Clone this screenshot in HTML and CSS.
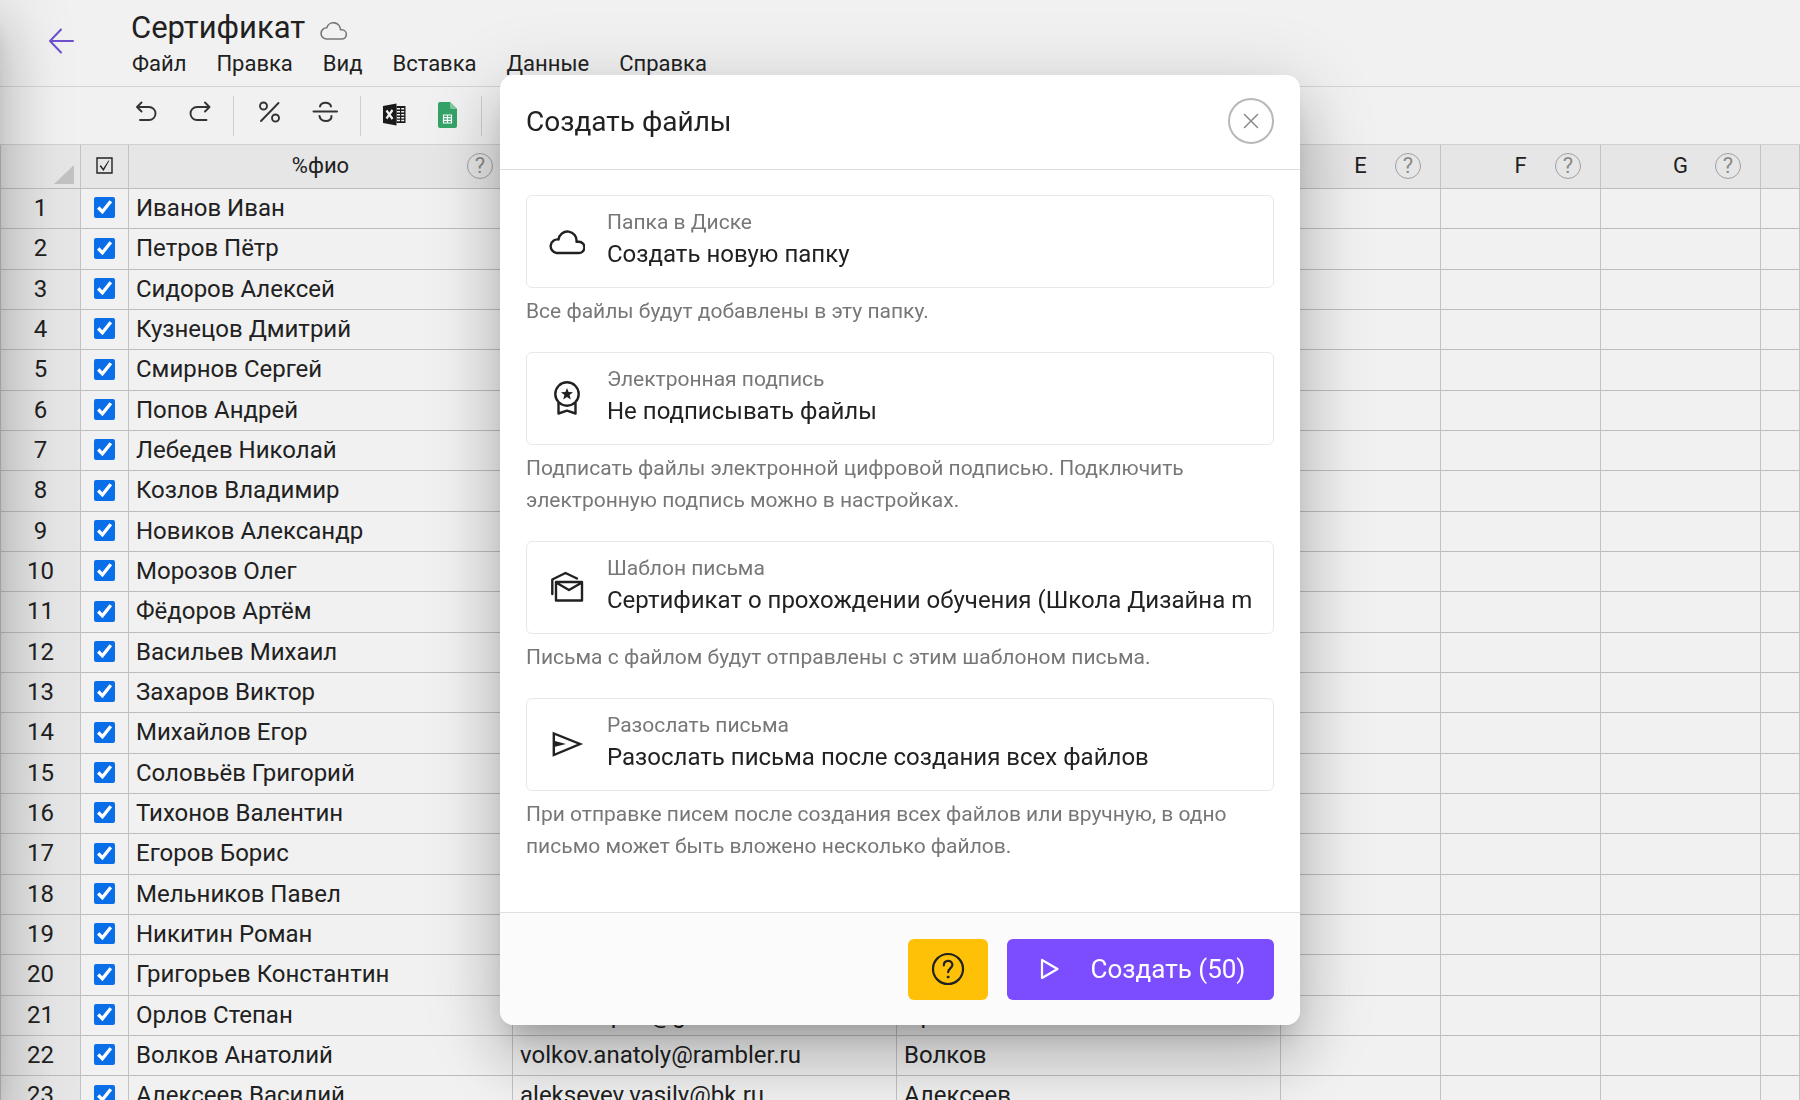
FILE: index.html
```html
<!DOCTYPE html>
<html lang="ru">
<head>
<meta charset="utf-8">
<title>Сертификат</title>
<meta name="viewport" content="width=device-width, initial-scale=1">
<link rel="stylesheet" href="styles.css">
</head>
<body>
<div class="app">
  <header class="topbar">
    <a class="back" href="#" aria-label="Назад">
      <svg width="26" height="26" viewBox="0 0 26 26" fill="none" stroke="currentColor" stroke-width="2" stroke-linecap="round" stroke-linejoin="round"><path d="M25 13H2M13 1.500L2 13l11 11.500"/></svg>
    </a>
    <div class="heading">
      <div class="title-row">
        <h1 class="title">Сертификат</h1>
        <svg class="saved" width="27" height="20" viewBox="0 0 27 20" fill="none" stroke="currentColor" stroke-width="1.600" stroke-linejoin="round"><path d="M6.500 19h15a4.600 4.600 0 0 0 0.400-9.200h-1.400A7 7 0 0 0 6.800 7.800a5.600 5.600 0 0 0-.3 11.200z"/></svg>
      </div>
      <nav class="menu">
        <button type="button">Файл</button>
        <button type="button">Правка</button>
        <button type="button">Вид</button>
        <button type="button">Вставка</button>
        <button type="button">Данные</button>
        <button type="button">Справка</button>
      </nav>
    </div>
  </header>

  <div class="toolbar">
    <button class="tool" type="button" aria-label="Отменить">
      <svg width="22" height="22" viewBox="0 0 22 22" fill="none" stroke="currentColor" stroke-width="1.900" stroke-linecap="round" stroke-linejoin="round"><path d="M5.500 1.500L1 6l4.500 4.500M1 6H13a6.500 6.500 0 0 1 0 13H4"/></svg>
    </button>
    <button class="tool" type="button" aria-label="Повторить">
      <svg width="22" height="22" viewBox="0 0 22 22" fill="none" stroke="currentColor" stroke-width="1.900" stroke-linecap="round" stroke-linejoin="round"><path d="M16 1.500l4.500 4.500-4.500 4.500M20.500 6H8a6.500 6.500 0 0 0 0 13h9.500"/></svg>
    </button>
    <span class="divider"></span>
    <button class="tool tool-wide" type="button" aria-label="Проценты">
      <svg width="22" height="22" viewBox="0 0 22 22" fill="none" stroke="currentColor" stroke-width="1.900" stroke-linecap="round"><path d="M20.500 2L3 20"/><circle cx="5.500" cy="5" r="3.500"/><circle cx="17.500" cy="17" r="3.500"/></svg>
    </button>
    <button class="tool tool-wide" type="button" aria-label="Зачёркнутый">
      <svg width="26" height="22" viewBox="0 0 26 22" fill="none" stroke="currentColor" stroke-width="2" stroke-linecap="round"><path d="M1.500 10.500h23.500M8 5.500C9 0.500 18 0.500 19 5.500M7.500 15c1 7 12.500 6.500 12 0"/></svg>
    </button>
    <span class="divider"></span>
    <button class="tool" type="button" aria-label="Excel">
      <svg class="excel" width="23" height="23" viewBox="0 0 23 23"><path fill="#1a1a1a" d="M0 3L13.500 0.500v22L0 20z"/><path fill="#1a1a1a" d="M13.500 3H22.500v17h-9z"/><path stroke="#f1f1f1" stroke-width="1.500" d="M14 5.700h3m1.200 0h3M14 8.700h3m1.200 0h3M14 11.700h3m1.200 0h3M14 14.700h3m1.200 0h3M14 17.600h3m1.200 0h3"/><path stroke="#f1f1f1" stroke-width="2.200" d="M3.500 7.500l6 8.500M9.500 7l-6 8.500"/></svg>
    </button>
    <button class="tool" type="button" aria-label="Google Таблицы">
      <svg class="sheets" width="19" height="26" viewBox="0 0 19 26"><path fill="#35a368" d="M2 0h10l7 7v17a2 2 0 0 1-2 2H2a2 2 0 0 1-2-2V2a2 2 0 0 1 2-2z"/><path fill="#82c8a3" d="M12 0l7 7h-5.500A1.500 1.500 0 0 1 12 5.500z"/><path fill="none" stroke="#fff" stroke-width="1.200" d="M5.500 13h8v8h-8zM5.500 15.700h8M5.500 18.300h8M9.500 13v8"/></svg>
    </button>
    <span class="divider"></span>
  </div>

  <main class="sheet">
    <table class="grid">
      <colgroup><col class="c-num"><col class="c-check"><col class="c-data"><col class="c-data"><col class="c-data"><col class="c-free"><col class="c-free"><col class="c-free"><col></colgroup>
      <thead>
        <tr>
          <th class="num corner"><svg width="20" height="19" viewBox="0 0 20 19"><path fill="#c2c2c2" d="M20 0v19H0z"/></svg></th>
          <th><svg class="tick" width="17" height="17" viewBox="0 0 17 17"><path fill="none" stroke="#222" stroke-width="1.400" d="M1 1h15v15H1z"/><path fill="#222" d="M3.500 9l1.500-.8 2.200 3.300L12.500 3.500l.8.300L7.500 14z"/></svg></th>
          <th><div class="head"><span class="name">%фио</span><button class="help" type="button">?</button></div></th>
          <th></th>
          <th></th>
          <th><div class="head"><span class="name">E</span><button class="help" type="button">?</button></div></th>
          <th><div class="head"><span class="name">F</span><button class="help" type="button">?</button></div></th>
          <th><div class="head"><span class="name">G</span><button class="help" type="button">?</button></div></th>
          <th></th>
        </tr>
      </thead>
      <tbody>
        <tr><td class="num">1</td><td class="check"><input type="checkbox" checked aria-label="Строка 1"></td><td>Иванов Иван</td><td></td><td></td><td></td><td></td><td></td><td></td></tr>
        <tr><td class="num">2</td><td class="check"><input type="checkbox" checked aria-label="Строка 2"></td><td>Петров Пётр</td><td></td><td></td><td></td><td></td><td></td><td></td></tr>
        <tr><td class="num">3</td><td class="check"><input type="checkbox" checked aria-label="Строка 3"></td><td>Сидоров Алексей</td><td></td><td></td><td></td><td></td><td></td><td></td></tr>
        <tr><td class="num">4</td><td class="check"><input type="checkbox" checked aria-label="Строка 4"></td><td>Кузнецов Дмитрий</td><td></td><td></td><td></td><td></td><td></td><td></td></tr>
        <tr><td class="num">5</td><td class="check"><input type="checkbox" checked aria-label="Строка 5"></td><td>Смирнов Сергей</td><td></td><td></td><td></td><td></td><td></td><td></td></tr>
        <tr><td class="num">6</td><td class="check"><input type="checkbox" checked aria-label="Строка 6"></td><td>Попов Андрей</td><td></td><td></td><td></td><td></td><td></td><td></td></tr>
        <tr><td class="num">7</td><td class="check"><input type="checkbox" checked aria-label="Строка 7"></td><td>Лебедев Николай</td><td></td><td></td><td></td><td></td><td></td><td></td></tr>
        <tr><td class="num">8</td><td class="check"><input type="checkbox" checked aria-label="Строка 8"></td><td>Козлов Владимир</td><td></td><td></td><td></td><td></td><td></td><td></td></tr>
        <tr><td class="num">9</td><td class="check"><input type="checkbox" checked aria-label="Строка 9"></td><td>Новиков Александр</td><td></td><td></td><td></td><td></td><td></td><td></td></tr>
        <tr><td class="num">10</td><td class="check"><input type="checkbox" checked aria-label="Строка 10"></td><td>Морозов Олег</td><td></td><td></td><td></td><td></td><td></td><td></td></tr>
        <tr><td class="num">11</td><td class="check"><input type="checkbox" checked aria-label="Строка 11"></td><td>Фёдоров Артём</td><td></td><td></td><td></td><td></td><td></td><td></td></tr>
        <tr><td class="num">12</td><td class="check"><input type="checkbox" checked aria-label="Строка 12"></td><td>Васильев Михаил</td><td></td><td></td><td></td><td></td><td></td><td></td></tr>
        <tr><td class="num">13</td><td class="check"><input type="checkbox" checked aria-label="Строка 13"></td><td>Захаров Виктор</td><td></td><td></td><td></td><td></td><td></td><td></td></tr>
        <tr><td class="num">14</td><td class="check"><input type="checkbox" checked aria-label="Строка 14"></td><td>Михайлов Егор</td><td></td><td></td><td></td><td></td><td></td><td></td></tr>
        <tr><td class="num">15</td><td class="check"><input type="checkbox" checked aria-label="Строка 15"></td><td>Соловьёв Григорий</td><td></td><td></td><td></td><td></td><td></td><td></td></tr>
        <tr><td class="num">16</td><td class="check"><input type="checkbox" checked aria-label="Строка 16"></td><td>Тихонов Валентин</td><td></td><td></td><td></td><td></td><td></td><td></td></tr>
        <tr><td class="num">17</td><td class="check"><input type="checkbox" checked aria-label="Строка 17"></td><td>Егоров Борис</td><td></td><td></td><td></td><td></td><td></td><td></td></tr>
        <tr><td class="num">18</td><td class="check"><input type="checkbox" checked aria-label="Строка 18"></td><td>Мельников Павел</td><td></td><td></td><td></td><td></td><td></td><td></td></tr>
        <tr><td class="num">19</td><td class="check"><input type="checkbox" checked aria-label="Строка 19"></td><td>Никитин Роман</td><td></td><td></td><td></td><td></td><td></td><td></td></tr>
        <tr><td class="num">20</td><td class="check"><input type="checkbox" checked aria-label="Строка 20"></td><td>Григорьев Константин</td><td></td><td></td><td></td><td></td><td></td><td></td></tr>
        <tr><td class="num">21</td><td class="check"><input type="checkbox" checked aria-label="Строка 21"></td><td>Орлов Степан</td><td>orlov.stepan@gmail.com</td><td>Орлов</td><td></td><td></td><td></td><td></td></tr>
        <tr><td class="num">22</td><td class="check"><input type="checkbox" checked aria-label="Строка 22"></td><td>Волков Анатолий</td><td>volkov.anatoly@rambler.ru</td><td>Волков</td><td></td><td></td><td></td><td></td></tr>
        <tr><td class="num">23</td><td class="check"><input type="checkbox" checked aria-label="Строка 23"></td><td>Алексеев Василий</td><td>alekseyev.vasily@bk.ru</td><td>Алексеев</td><td></td><td></td><td></td><td></td></tr>
      </tbody>
    </table>
  </main>
</div>

<div class="overlay">
  <section class="dialog" role="dialog" aria-labelledby="dialog-title">
    <header class="dialog-head">
      <h2 class="dialog-title" id="dialog-title">Создать файлы</h2>
      <button class="close" type="button" aria-label="Закрыть">
        <svg width="16" height="16" viewBox="0 0 16 16" fill="none" stroke="currentColor" stroke-width="1.500" stroke-linecap="round"><path d="M1.500 1.500l13 13M14.500 1.500l-13 13"/></svg>
      </button>
    </header>
    <div class="dialog-body">
      <div class="field">
        <div class="card">
          <svg class="icon" width="36" height="36" viewBox="0 0 36 36" fill="none" stroke="currentColor" stroke-width="2.400" stroke-linejoin="round"><path d="M7.500 30h22a5.600 5.600 0 0 0 0.500-11.300h-2.500a9 9 0 0 0-18-2.200 6.800 6.800 0 0 0-2 13.500z"/></svg>
          <div class="text">
            <label for="folder">Папка в Диске</label>
            <input id="folder" type="text" readonly value="Создать новую папку">
          </div>
        </div>
        <p class="hint">Все файлы будут добавлены в эту папку.</p>
      </div>
      <div class="field">
        <div class="card">
          <svg class="icon" width="36" height="36" viewBox="0 0 36 36" fill="none" stroke="currentColor" stroke-width="2.400" stroke-linejoin="round"><circle cx="18" cy="14" r="11.700"/><path d="M9.500 22.500V33.500l8.500-2.800 8.500 2.800V22.500"/><path fill="currentColor" stroke="none" d="M18 8l1.600 4.100 4.400.2-3.400 2.800 1.200 4.300L18 17l-3.800 2.400 1.200-4.300-3.400-2.800 4.400-.2z"/></svg>
          <div class="text">
            <label for="signature">Электронная подпись</label>
            <input id="signature" type="text" readonly value="Не подписывать файлы">
          </div>
        </div>
        <p class="hint">Подписать файлы электронной цифровой подписью. Подключить электронную подпись можно в настройках.</p>
      </div>
      <div class="field">
        <div class="card">
          <svg class="icon" width="36" height="36" viewBox="0 0 36 36" fill="none" stroke="currentColor" stroke-width="2.400" stroke-linejoin="round" stroke-linecap="round"><path d="M7 13h26v18.500H7zM7 13.500l13 7.500 13-7.500"/><path d="M3.300 25V10.500L16.500 4l11.500 5.500"/></svg>
          <div class="text">
            <label for="template">Шаблон письма</label>
            <input id="template" type="text" readonly value="Сертификат о прохождении обучения (Школа Дизайна m">
          </div>
        </div>
        <p class="hint">Письма с файлом будут отправлены с этим шаблоном письма.</p>
      </div>
      <div class="field">
        <div class="card">
          <svg class="icon" width="36" height="36" viewBox="0 0 36 36" fill="none" stroke="currentColor" stroke-width="2.400"><path d="M4.800 7.500v21.500L31 18z"/><path fill="currentColor" stroke="none" d="M5 14.800L17 18 5 21z"/></svg>
          <div class="text">
            <label for="mailing">Разослать письма</label>
            <input id="mailing" type="text" readonly value="Разослать письма после создания всех файлов">
          </div>
        </div>
        <p class="hint">При отправке писем после создания всех файлов или вручную, в одно письмо может быть вложено несколько файлов.</p>
      </div>
    </div>
    <footer class="dialog-foot">
      <button class="btn btn-help" type="button" aria-label="Помощь">
        <svg width="34" height="34" viewBox="0 0 34 34" fill="none" stroke="currentColor" stroke-width="2.200" stroke-linecap="round"><circle cx="17" cy="17" r="15"/><path d="M12.800 13.500c0-6 8.600-6 8.600-.8 0 3.300-4.300 4-4.300 7.500"/><circle cx="17" cy="25" r="1" fill="currentColor" stroke-width="1"/></svg>
      </button>
      <button class="btn btn-create" type="button">
        <svg width="20" height="24" viewBox="0 0 20 24" fill="none" stroke="currentColor" stroke-width="2.200" stroke-linejoin="round"><path d="M2 3v18l15.500-9z"/></svg>
        Создать (50)
      </button>
    </footer>
  </section>
</div>
</body>
</html>
```
FILE: styles.css
```css
* {
  box-sizing: border-box;
}

body {
  margin: 0;
  background: #f1f1f1;
  color: #212121;
  font-family: Roboto, "Noto Sans", sans-serif;
  font-size: 24px;
}

button {
  margin: 0;
  padding: 0;
  border: 0;
  background: none;
  color: inherit;
  font: inherit;
}

.app {
  display: flex;
  flex-direction: column;
  height: 100vh;
  overflow: hidden;
}

.app::before {
  content: "";
  position: fixed;
  top: 0;
  bottom: 0;
  left: -100px;
  width: 100px;
  box-shadow: 0 18px 24px -11px rgba(0, 0, 0, 0.2), 0 38px 60px 5px rgba(0, 0, 0, 0.14), 0 14px 72px 12px rgba(0, 0, 0, 0.12);
  pointer-events: none;
}

.topbar {
  display: flex;
  flex: none;
  height: 87px;
  border-bottom: 1px solid #d4d4d4;
}

.back {
  width: 131px;
  padding: 28px 0 0 48px;
  color: #6f50cf;
}

.back svg,
.tool svg,
.btn svg,
.close svg {
  display: block;
}

.title-row {
  display: flex;
  align-items: center;
  gap: 15px;
  height: 48px;
  padding-top: 8px;
}

.title {
  margin: 0;
  font-size: 31px;
  font-weight: 400;
  line-height: 40px;
}

.saved {
  margin-top: 4px;
  color: #777;
}

.menu {
  display: flex;
  gap: 30px;
  padding-left: 1px;
  font-size: 22px;
  line-height: 32px;
}

.toolbar {
  display: flex;
  flex: none;
  align-items: center;
  height: 58px;
  padding-left: 120px;
  border-bottom: 1px solid #d0d0d0;
  color: #333;
}

.tool {
  display: flex;
  align-items: center;
  justify-content: center;
  width: 53px;
  height: 40px;
  padding-bottom: 8px;
}

.tool-wide {
  width: 56px;
}

.tool .excel,
.tool .sheets {
  margin-top: 6px;
}

.divider {
  width: 1px;
  height: 40px;
  margin: 0 7px;
  background: #cfcfcf;
}

.sheet {
  flex: 1;
  min-height: 0;
  overflow: hidden;
}

.grid {
  width: 100%;
  table-layout: fixed;
  border-collapse: separate;
  border-spacing: 0;
  line-height: 32px;
}

.c-num {
  width: 81px;
}

.c-check {
  width: 48px;
}

.c-data {
  width: 384px;
}

.c-free {
  width: 160px;
}

.grid th,
.grid td {
  height: 40px;
  padding: 0 7px 2px;
  border-right: 1px solid #c2c2c2;
  border-bottom: 1px solid #bdbdbd;
  text-align: left;
  white-space: nowrap;
  overflow: hidden;
}

.grid tbody tr:nth-child(3n + 2) td {
  height: 41px;
}

.grid th {
  height: 44px;
  padding: 0 0 1px;
  background: #e6e6e6;
  font-size: 22px;
  font-weight: 400;
  text-align: center;
}

.grid .num {
  border-left: 1px solid #c2c2c2;
  background: #e6e6e6;
  text-align: center;
}

.grid .corner {
  padding: 15px 6px 0 0;
  line-height: 20px;
  text-align: right;
}

.corner svg,
.tick {
  display: inline-block;
  vertical-align: middle;
}

.grid th:nth-child(2) {
  padding: 0 1px 4px 0;
}

.head {
  display: grid;
  grid-template-columns: 1fr auto 1fr;
  align-items: center;
}

.name {
  grid-column: 2;
}

.help {
  justify-self: end;
  width: 26px;
  height: 26px;
  margin-right: 19px;
  border: 1px solid #a0a0a0;
  border-radius: 50%;
  color: #8c8c8c;
  line-height: 24px;
}

.grid .check {
  padding: 0 1px 2px 0;
  text-align: center;
}

.check input {
  display: block;
  width: 21px;
  height: 21px;
  margin: 0 auto;
  accent-color: #0a6ee8;
}

.overlay {
  position: fixed;
  inset: 0;
  display: flex;
  align-items: center;
  justify-content: center;
}

.dialog {
  width: 800px;
  max-width: 100%;
  border-radius: 14px;
  background: #fff;
  box-shadow: 0 18px 24px -11px rgba(0, 0, 0, 0.2), 0 38px 60px 5px rgba(0, 0, 0, 0.14), 0 14px 72px 12px rgba(0, 0, 0, 0.12);
  overflow: hidden;
}

.dialog-head {
  display: flex;
  align-items: center;
  justify-content: space-between;
  height: 95px;
  padding: 0 26px 2px;
  border-bottom: 1px solid #dcdcdc;
}

.dialog-title {
  margin: 0;
  font-size: 28px;
  font-weight: 400;
}

.close {
  display: flex;
  align-items: center;
  justify-content: center;
  width: 46px;
  height: 46px;
  border: 2px solid #b8b8b8;
  border-radius: 50%;
  color: #8a8a8a;
}

.dialog-body {
  padding: 25px 26px;
}

.field {
  margin-bottom: 25px;
}

.card {
  display: flex;
  align-items: center;
  gap: 22px;
  height: 93px;
  padding: 0 18px 0 22px;
  border: 1px solid #e8e8e8;
  border-radius: 6px;
}

.icon {
  flex: none;
  margin-bottom: 2px;
}

.text {
  display: flex;
  flex: 1;
  flex-direction: column;
  min-width: 0;
  padding-bottom: 8px;
  line-height: 32px;
}

.text label {
  color: #777;
  font-size: 21px;
}

.text input {
  width: 100%;
  height: 32px;
  padding: 0;
  border: 0;
  outline: 0;
  background: none;
  color: #212121;
  font: inherit;
}

.hint {
  margin: 7px 0 0;
  color: #777;
  font-size: 21px;
  line-height: 32px;
}

.dialog-foot {
  display: flex;
  justify-content: flex-end;
  gap: 19px;
  padding: 26px 26px 25px;
  border-top: 1px solid #e0e0e0;
  background: #fbfbfb;
}

.btn {
  display: flex;
  align-items: center;
  justify-content: center;
  height: 61px;
  padding-bottom: 2px;
  border-radius: 6px;
  font-size: 26px;
}

.btn-help {
  width: 80px;
  background: #ffc107;
}

.btn-create {
  gap: 31px;
  width: 267px;
  padding-left: 4px;
  background: #7c4dff;
  color: #fff;
}
```
